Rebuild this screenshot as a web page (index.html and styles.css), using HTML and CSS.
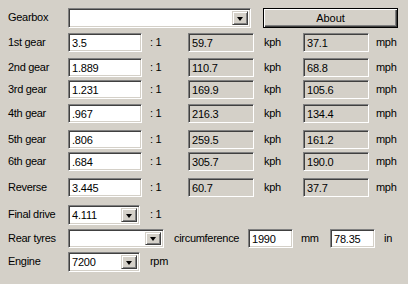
FILE: index.html
```html
<!DOCTYPE html>
<html lang="en">
<head>
  <meta charset="UTF-8">
  <title>Gear speeds</title>
  <link rel="stylesheet" href="styles.css">
</head>
<body>

<div class="dlg">
  <div class="row h25">
    <span class="lbl">Gearbox</span>
    <div class="combo gearbox"><span class="val"></span><span class="dd"><i class="arrow"></i></span></div>
    <button class="about">About</button>
  </div>

  <div class="row h25">
    <span class="lbl">1st gear</span>
    <input class="field ratio" value="3.5">
    <span class="unit to1">: 1</span>
    <input class="field calc" value="59.7" readonly>
    <span class="unit kph">kph</span>
    <input class="field calc" value="37.1" readonly>
    <span class="unit mph">mph</span>
  </div>

  <div class="row h22">
    <span class="lbl">2nd gear</span>
    <input class="field ratio" value="1.889">
    <span class="unit to1">: 1</span>
    <input class="field calc" value="110.7" readonly>
    <span class="unit kph">kph</span>
    <input class="field calc" value="68.8" readonly>
    <span class="unit mph">mph</span>
  </div>

  <div class="row h24">
    <span class="lbl">3rd gear</span>
    <input class="field ratio" value="1.231">
    <span class="unit to1">: 1</span>
    <input class="field calc" value="169.9" readonly>
    <span class="unit kph">kph</span>
    <input class="field calc" value="105.6" readonly>
    <span class="unit mph">mph</span>
  </div>

  <div class="row h26">
    <span class="lbl">4th gear</span>
    <input class="field ratio" value=".967">
    <span class="unit to1">: 1</span>
    <input class="field calc" value="216.3" readonly>
    <span class="unit kph">kph</span>
    <input class="field calc" value="134.4" readonly>
    <span class="unit mph">mph</span>
  </div>

  <div class="row h22">
    <span class="lbl">5th gear</span>
    <input class="field ratio" value=".806">
    <span class="unit to1">: 1</span>
    <input class="field calc" value="259.5" readonly>
    <span class="unit kph">kph</span>
    <input class="field calc" value="161.2" readonly>
    <span class="unit mph">mph</span>
  </div>

  <div class="row h26">
    <span class="lbl">6th gear</span>
    <input class="field ratio" value=".684">
    <span class="unit to1">: 1</span>
    <input class="field calc" value="305.7" readonly>
    <span class="unit kph">kph</span>
    <input class="field calc" value="190.0" readonly>
    <span class="unit mph">mph</span>
  </div>

  <div class="row h27">
    <span class="lbl">Reverse</span>
    <input class="field ratio" value="3.445">
    <span class="unit to1">: 1</span>
    <input class="field calc" value="60.7" readonly>
    <span class="unit kph">kph</span>
    <input class="field calc" value="37.7" readonly>
    <span class="unit mph">mph</span>
  </div>

  <div class="row h24">
    <span class="lbl">Final drive</span>
    <div class="combo small"><span class="val">4.111</span><span class="dd"><i class="arrow"></i></span></div>
    <span class="unit after-combo">: 1</span>
  </div>

  <div class="row h23">
    <span class="lbl">Rear tyres</span>
    <div class="combo tyres"><span class="val"></span><span class="dd"><i class="arrow"></i></span></div>
    <span class="unit circ">circumference</span>
    <input class="field tyre" value="1990">
    <span class="unit mm">mm</span>
    <input class="field tyre" value="78.35">
    <span class="unit inch">in</span>
  </div>

  <div class="row h20">
    <span class="lbl">Engine</span>
    <div class="combo small"><span class="val">7200</span><span class="dd"><i class="arrow"></i></span></div>
    <span class="unit after-combo">rpm</span>
  </div>
</div>

</body>
</html>
```

FILE: styles.css
```css
html, body {
  margin: 0;
  background: #d4d0c8;
}
body {
  font-family: "Liberation Sans", Arial, sans-serif;
  font-size: 11px;
  color: #000;
}
.dlg {
  padding: 8px 0 0 8px;
  width: 400px;
  height: 276px;
}
.row {
  display: flex;
  align-items: flex-start;
}
.row > * {
  flex: none;
}
.h20 { height: 20px; }
.h22 { height: 22px; }
.h23 { height: 23px; }
.h24 { height: 24px; }
.h25 { height: 25px; }
.h26 { height: 26px; }
.h27 { height: 27px; }

.lbl, .unit {
  line-height: 19px;
  white-space: nowrap;
  letter-spacing: -0.3px;
}
.lbl { width: 60px; }

/* sunken edit boxes */
.field, .combo {
  box-sizing: border-box;
  height: 19px;
  border-top: 1px solid #808080;
  border-left: 1px solid #808080;
  border-bottom: 1px solid #fff;
  border-right: 1px solid #fff;
  box-shadow: inset 1px 1px 0 #404040, inset -1px -1px 0 #d4d0c8;
  background: #fff;
  font: inherit;
  color: #000;
  margin: 0;
  padding: 1px 2px 0 3px;
  outline: none;
  letter-spacing: -0.2px;
}
.field.calc { background: #d4d0c8; width: 66px; }
.field.ratio { width: 74px; }
.field.tyre { width: 45px; }

.to1 { width: 38px; padding-left: 8px; }
.kph { width: 39px; padding-left: 10px; }
.mph { padding-left: 7px; }

.combo {
  display: flex;
  height: 20px;
  padding: 2px;
}
.combo .val {
  flex: 1;
  line-height: 15px;
  padding-left: 1px;
}
.combo.gearbox { width: 183px; }
.combo.small { width: 72px; }
.combo.tyres { width: 96px; height: 19px; }
.dd {
  box-sizing: border-box;
  width: 16px;
  height: 100%;
  background: #d4d0c8;
  border-top: 1px solid #d4d0c8;
  border-left: 1px solid #d4d0c8;
  border-bottom: 1px solid #404040;
  border-right: 1px solid #404040;
  box-shadow: inset 1px 1px 0 #fff, inset -1px -1px 0 #808080;
  display: flex;
  align-items: center;
  justify-content: center;
}
.arrow {
  width: 0;
  height: 0;
  border-left: 3.5px solid transparent;
  border-right: 3.5px solid transparent;
  border-top: 4px solid #000;
  margin-top: 1px;
}

.after-combo { padding-left: 10px; }
.circ { width: 74px; padding-left: 10px; }
.mm { width: 29px; padding-left: 8px; }
.inch { padding-left: 9px; }

.about {
  box-sizing: border-box;
  margin-left: 12px;
  width: 135px;
  height: 20px;
  font: inherit;
  color: #000;
  background: #d4d0c8;
  border: 1px solid #000;
  box-shadow: inset 1px 1px 0 #fff, inset -1px -1px 0 #404040, inset -2px -2px 0 #808080;
  padding: 0;
}
```
